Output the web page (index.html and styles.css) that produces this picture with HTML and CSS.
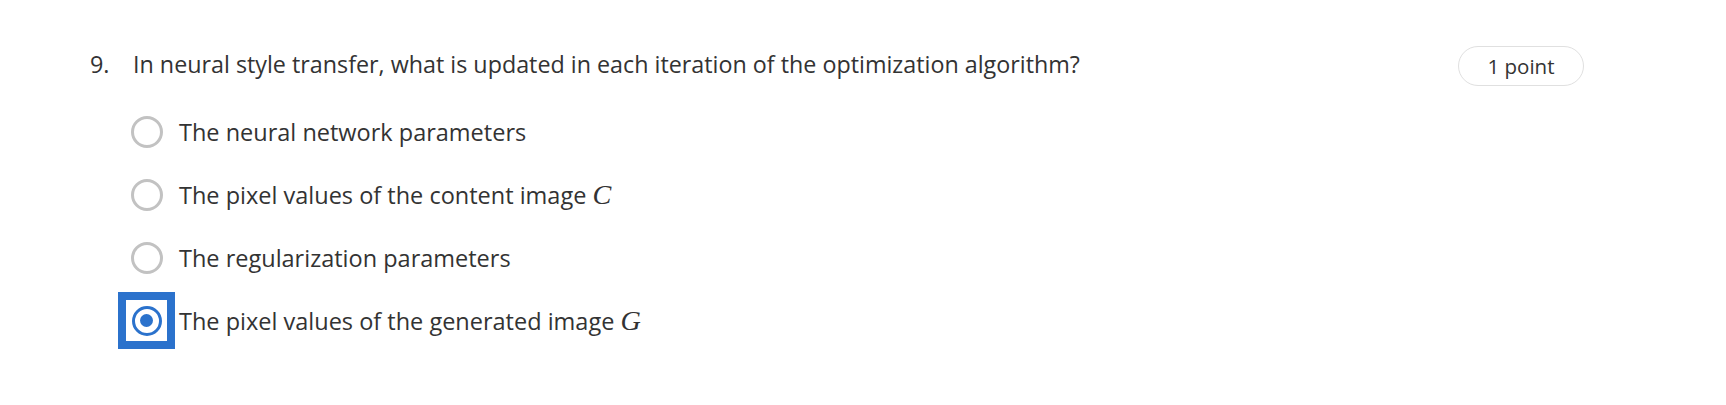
FILE: index.html
```html
<!DOCTYPE html>
<html lang="en">
<head>
<meta charset="utf-8">
<title>Question 9</title>
<link rel="stylesheet" href="styles.css">
</head>
<body>
<div class="page">
  <div class="q-head">
    <div class="q-num">9.</div>
    <div class="q-text">In neural style transfer, what is updated in each iteration of the optimization algorithm?</div>
    <div class="pill">1 point</div>
  </div>
  <div class="options">
    <div class="option">
      <span class="radio-box"><span class="radio"></span></span>
      <span class="opt-text">The neural network parameters</span>
    </div>
    <div class="option">
      <span class="radio-box"><span class="radio"></span></span>
      <span class="opt-text">The pixel values of the content image <span class="math">C</span></span>
    </div>
    <div class="option">
      <span class="radio-box"><span class="radio"></span></span>
      <span class="opt-text">The regularization parameters</span>
    </div>
    <div class="option">
      <span class="radio-box focused"><span class="radio checked"><span class="dot"></span></span></span>
      <span class="opt-text">The pixel values of the generated image <span class="math">G</span></span>
    </div>
  </div>
</div>
</body>
</html>
```

FILE: styles.css
```css
html, body {
  margin: 0;
  padding: 0;
  background: #ffffff;
}

body {
  font-family: "Open Sans", "Noto Sans", sans-serif;
  color: #333333;
}

.page {
  padding: 46px 142px 40px 90px;
}

.q-head {
  display: flex;
  align-items: flex-start;
}

.q-num {
  width: 43px;
  flex: none;
  font-size: 23.4px;
  line-height: 32px;
  margin-top: 2px;
}

.q-text {
  flex: 1;
  font-size: 23.3px;
  line-height: 32px;
  margin-top: 2px;
}

.pill {
  flex: none;
  box-sizing: border-box;
  width: 126px;
  height: 40px;
  border: 1px solid #e0e0e0;
  border-radius: 20px;
  display: flex;
  align-items: center;
  justify-content: center;
  font-size: 20.5px;
  color: #333333;
}

.options {
  display: flex;
  flex-direction: column;
  gap: 22px;
  margin-top: 25px;
  padding-left: 36px;
}

.option {
  display: flex;
  align-items: center;
  gap: 12px;
}

.radio-box {
  box-sizing: border-box;
  width: 41px;
  height: 41px;
  display: flex;
  align-items: center;
  justify-content: center;
  flex: none;
  background: #ffffff;
}

.radio-box.focused {
  width: 57px;
  height: 57px;
  margin: -8px;
  border: 8px solid #2b72cc;
}

.option-focused-gap {
  gap: 12px;
}

.radio {
  box-sizing: border-box;
  width: 32px;
  height: 32px;
  border: 3px solid #c2c2c2;
  border-radius: 50%;
  display: flex;
  align-items: center;
  justify-content: center;
}

.radio.checked {
  width: 30px;
  height: 30px;
  border-color: #2b72cc;
}

.dot {
  width: 13px;
  height: 13px;
  border-radius: 50%;
  background: #2b72cc;
}

.opt-text {
  font-size: 23.5px;
  line-height: 32px;
}

.math {
  font-family: "Liberation Serif", "DejaVu Serif", serif;
  font-style: italic;
  font-size: 1.2em;
  line-height: 1;
}
```
